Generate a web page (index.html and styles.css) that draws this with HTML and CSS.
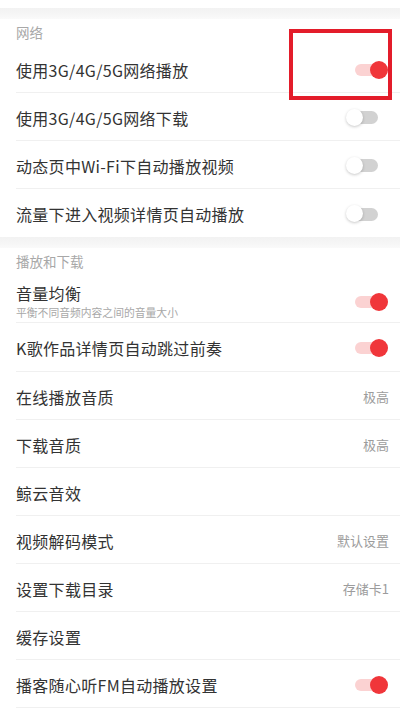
FILE: index.html
```html
<!DOCTYPE html>
<html lang="zh-CN">
<head>
<meta charset="utf-8">
<link rel="stylesheet" href="styles.css">
</head>
<body>
<div class="page">
  <div class="top-strip"></div>
  <div class="band"></div>

  <section class="group">
    <div class="group-title">网络</div>
    <div class="row">
      <span class="label">使用3G/4G/5G网络播放</span>
      <span class="toggle on"><span class="track"></span><span class="knob"></span></span>
    </div>
    <div class="row">
      <span class="label">使用3G/4G/5G网络下载</span>
      <span class="toggle off"><span class="track"></span><span class="knob"></span></span>
    </div>
    <div class="row">
      <span class="label">动态页中Wi-Fi下自动播放视频</span>
      <span class="toggle off"><span class="track"></span><span class="knob"></span></span>
    </div>
    <div class="row last">
      <span class="label">流量下进入视频详情页自动播放</span>
      <span class="toggle off"><span class="track"></span><span class="knob"></span></span>
    </div>
  </section>

  <div class="band"></div>

  <section class="group">
    <div class="group-title">播放和下载</div>
    <div class="row tall">
      <div class="stack">
        <span class="label">音量均衡</span>
        <span class="sub">平衡不同音频内容之间的音量大小</span>
      </div>
      <span class="toggle on"><span class="track"></span><span class="knob"></span></span>
    </div>
    <div class="row k">
      <span class="label">K歌作品详情页自动跳过前奏</span>
      <span class="toggle on"><span class="track"></span><span class="knob"></span></span>
    </div>
    <div class="row">
      <span class="label">在线播放音质</span>
      <span class="value">极高</span>
    </div>
    <div class="row">
      <span class="label">下载音质</span>
      <span class="value">极高</span>
    </div>
    <div class="row">
      <span class="label">鲸云音效</span>
    </div>
    <div class="row">
      <span class="label">视频解码模式</span>
      <span class="value">默认设置</span>
    </div>
    <div class="row">
      <span class="label">设置下载目录</span>
      <span class="value">存储卡1</span>
    </div>
    <div class="row">
      <span class="label">缓存设置</span>
    </div>
    <div class="row">
      <span class="label">播客随心听FM自动播放设置</span>
      <span class="toggle on"><span class="track"></span><span class="knob"></span></span>
    </div>
  </section>

  <div class="highlight"></div>
</div>
</body>
</html>
```

FILE: styles.css
```css
* { box-sizing: border-box; }
html, body {
  margin: 0;
  padding: 0;
  background: #ffffff;
}
body {
  font-family: "Noto Sans CJK SC", "Noto Sans", sans-serif;
  color: #333333;
  width: 400px;
  height: 710px;
  overflow: hidden;
}
.page {
  position: relative;
  width: 400px;
}
.top-strip {
  height: 8px;
  background: #ffffff;
}
.band {
  height: 11px;
  background: linear-gradient(#f2f2f2, #f6f6f6 60%, #fafafa);
}
.group-title {
  height: 26px;
  padding-left: 16px;
  padding-top: 4px;
  font-size: 13.5px;
  line-height: 18px;
  color: #a8a8a8;
}
.row {
  display: flex;
  align-items: center;
  justify-content: space-between;
  height: 48px;
  margin-left: 16px;
  padding-right: 11px;
  padding-top: 2px;
  border-bottom: 1px solid #f0f0f0;
}
.row.last { border-bottom: none; }
.row.tall {
  height: 49px;
  align-items: flex-start;
  padding-top: 9px;
}
.row.tall .toggle { margin-top: 10px; }
.row.k { height: 49px; }
.label {
  font-size: 16px;
  line-height: 20px;
  letter-spacing: 0.3px;
  color: #333333;
}
.stack {
  display: flex;
  flex-direction: column;
  gap: 2px;
}
.sub {
  font-size: 10.8px;
  line-height: 14px;
  color: #a8a8a8;
}
.value {
  font-size: 13px;
  line-height: 18px;
  color: #9c9c9c;
}
.toggle {
  position: relative;
  width: 42px;
  height: 18px;
  margin-right: 1px;
  flex: none;
}
.toggle .track {
  position: absolute;
  border-radius: 7px;
}
.toggle .knob {
  position: absolute;
  top: 0;
  border-radius: 50%;
}
.toggle.on .track {
  left: 9px;
  right: 8px;
  top: 3px;
  height: 12px;
  background: #fbd2d2;
}
.toggle.on .knob {
  right: 0;
  width: 18px;
  height: 18px;
  background: #f0363a;
}
.toggle.off .track {
  left: 6px;
  right: 10px;
  top: 2.5px;
  height: 13px;
  background: #d2d2d2;
}
.toggle.off .knob {
  left: 0;
  width: 17px;
  height: 17px;
  background: #ffffff;
  box-shadow: 0 1px 3px rgba(0, 0, 0, 0.22);
}
.highlight {
  position: absolute;
  left: 289px;
  top: 29px;
  width: 103px;
  height: 71px;
  border: 4px solid #e31c2a;
}
```
